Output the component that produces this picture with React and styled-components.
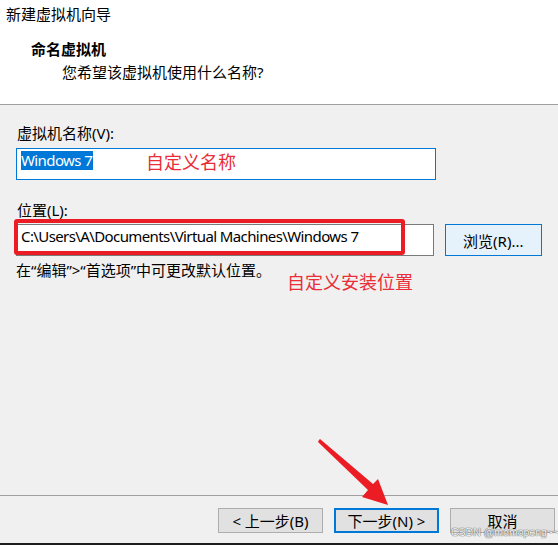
import React from 'react';
import styled, { createGlobalStyle } from 'styled-components';

const Global = createGlobalStyle`
  html, body { margin: 0; padding: 0; background: #f0f0f0; }
  body { font-family: "Noto Sans", "Noto Sans CJK SC", sans-serif; }
`;

const Window = styled.div`
  position: relative; width: 558px; height: 545px; box-sizing: border-box;
  background: #f0f0f0; display: flex; flex-direction: column;
  border-bottom: 2px solid #1e1e1e; overflow: hidden;
  font-size: 15px; color: #000;
`;
const Header = styled.div`
  height: 105px; box-sizing: border-box; background: #fff;
  border-bottom: 1px solid #a0a0a0; display: flex; flex-direction: column;
`;
const Line = styled.div`
  line-height: 20px; white-space: nowrap;
  padding-left: ${p => p.indent || 0}px;
  margin-top: ${p => p.top || 0}px;
  font-weight: ${p => (p.bold ? 700 : 400)};
`;
const Body = styled.div`
  position: relative; flex: 1; padding: 18px 16px 0 16px;
  display: flex; flex-direction: column;
`;
const Label = styled.div`
  line-height: 20px; padding-left: 1px; margin-top: ${p => p.top || 0}px;
`;
const Row = styled.div`
  display: flex; align-items: flex-start; gap: 11px; margin-top: ${p => p.top || 0}px;
`;
const Field = styled.div`
  position: relative; width: 420px; height: 32px; box-sizing: border-box;
  background: #fff; border: 1px solid ${p => (p.focused ? '#0078d7' : '#7a7a7a')};
  padding: 2px 0 0 4px; line-height: 19px; white-space: nowrap;
  letter-spacing: -0.6px;
`;
const Selected = styled.span`
  display: inline-block; background: #0078d7; color: #fff; line-height: 19px; padding-right: 1px;
`;
const Browse = styled.button`
  width: 98px; height: 32px; box-sizing: border-box; margin: 0;
  background: #e5f1fb; border: 1px solid #0078d7; font: inherit; color: #000; padding: 0;
`;
const Hint = styled.div`
  line-height: 20px; margin-top: 4px; white-space: nowrap;
`;
const Note = styled.div`
  position: absolute; left: ${p => p.x}px; top: ${p => p.y}px;
  color: #ea2d36; font-size: 18px; line-height: 24px; white-space: nowrap;
`;
const RedBox = styled.div`
  position: absolute; left: 14px; top: 219px; width: 391px; height: 36px;
  box-sizing: border-box; border: 4px solid #ec1c24; border-radius: 3px;
`;
const Footer = styled.div`
  height: 48px; box-sizing: border-box; border-top: 1px solid #a0a0a0;
  display: flex; justify-content: flex-end; align-items: flex-start;
  gap: 11px; padding: 12px 3px 0 0;
`;
const Button = styled.button`
  width: 105px; height: 25px; box-sizing: border-box; margin: 0; padding: 0;
  background: #e1e1e1; font: inherit; color: #000; line-height: 20px;
  border: ${p => (p.primary ? '2px solid #0078d7' : '1px solid #adadad')};
`;
const Watermark = styled.div`
  position: absolute; left: 451px; top: 526px; font-size: 10.5px; line-height: 13px;
  color: #f6f6f6; text-shadow: 0 0 1px #666, 0 0 1px #666, 0 0 1px #888;
  font-family: "Liberation Sans", sans-serif; white-space: nowrap;
`;
const Arrow = styled.svg`
  position: absolute; left: 0; top: 0; pointer-events: none;
`;

export default function App() {
  return (
    <Window>
      <Global />
      <Header>
        <Line indent={6} top={4}>新建虚拟机向导</Line>
        <Line indent={31} top={15} bold>命名虚拟机</Line>
        <Line indent={62} top={3}>您希望该虚拟机使用什么名称?</Line>
      </Header>
      <Body>
        <Label>虚拟机名称(V):</Label>
        <Row top={5}>
          <Field focused>
            <Selected>Windows 7</Selected>
          </Field>
        </Row>
        <Label top={20}>位置(L):</Label>
        <Row top={4}>
          <Field>C:\Users\A\Documents\Virtual Machines\Windows 7</Field>
          <Browse>浏览(R)...</Browse>
        </Row>
        <Hint>在“编辑”&gt;“首选项”中可更改默认位置。</Hint>
      </Body>
      <Footer>
        <Button>&lt; 上一步(B)</Button>
        <Button primary>下一步(N) &gt;</Button>
        <Button>取消</Button>
      </Footer>
      <Note x={146} y={150}>自定义名称</Note>
      <Note x={287} y={270}>自定义安装位置</Note>
      <RedBox />
      <Arrow width="558" height="545" viewBox="0 0 558 545">
        <polygon
          points="319,440 320,439 373,484 378,479 388,505 362,497 368,490 318,442"
          fill="#ec1c24"
        />
      </Arrow>
      <Watermark>CSDN @momopeng~~</Watermark>
    </Window>
  );
}
